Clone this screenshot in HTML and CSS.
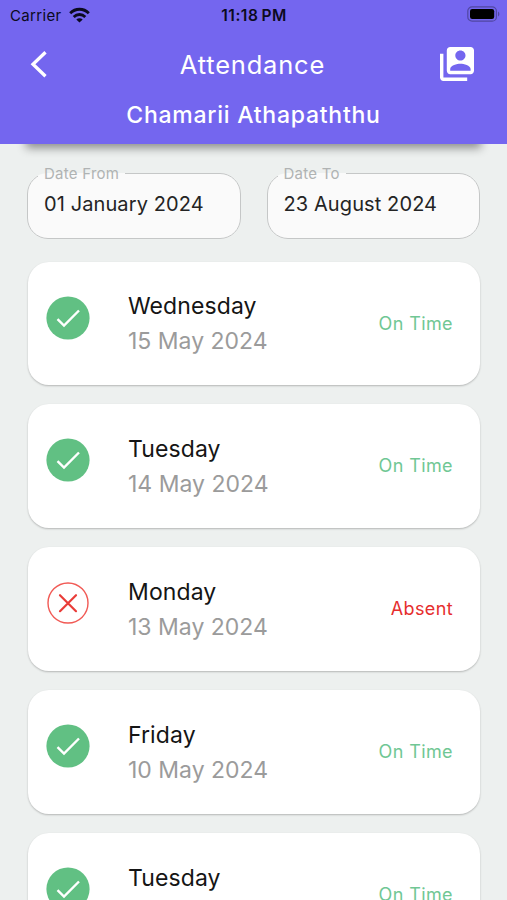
FILE: index.html
```html
<!DOCTYPE html>
<html lang="en">
<head>
<meta charset="utf-8">
<title>Attendance</title>
<link rel="stylesheet" href="styles.css">
</head>
<body>
<svg class="defs" aria-hidden="true">
  <symbol id="present" viewBox="0 0 44 44"><circle cx="22" cy="22" r="21.6" fill="#61c083"/><path d="M11.5 23.2 18 29.6 33 14.5" fill="none" stroke="#fff" stroke-width="2.4"/></symbol>
  <symbol id="absent" viewBox="0 0 44 44"><circle cx="22" cy="22" r="20" fill="none" stroke="#f15a55" stroke-width="1.4"/><path d="M14 14.2 30 30.2M30 14.2 14 30.2" fill="none" stroke="#e93c38" stroke-width="2.2" stroke-linecap="round"/></symbol>
</svg>
<header class="header">
  <div class="status">
    <div class="carrier"><span>Carrier</span>
      <svg width="21" height="16" viewBox="0 0 21 16"><g fill="none" stroke="#0b0a20" stroke-width="2.8"><path d="M1.2 6.2C6.4.9 14.6.9 19.8 6.2"/><path d="M4.7 9.9c3.3-3.2 8.3-3.2 11.6 0"/></g><path d="M7.3 12.4c1.9-1.7 4.5-1.7 6.4 0l-3.2 3.2z" fill="#0b0a20"/></svg>
    </div>
    <span class="clock">11:18 PM</span>
    <svg class="battery" width="33" height="16" viewBox="0 0 33 16"><rect x=".8" y=".8" width="28.6" height="14.4" rx="4.3" fill="none" stroke="#5047a2" stroke-width="1.2"/><rect x="3" y="3" width="24.2" height="10" rx="2.2" fill="#000"/><path d="M31 5.500c1.800.8 1.800 4.200 0 5z" fill="#5047a2"/></svg>
  </div>
  <div class="bar">
    <svg width="18" height="28" viewBox="0 0 18 28"><path d="M15.500 2.200 3 14.200 15.500 26.200" fill="none" stroke="#fff" stroke-width="3.300"/></svg>
    <h1 class="title">Attendance</h1>
    <svg width="34" height="34" viewBox="0 0 20 20"><path fill="#fff" fill-rule="evenodd" d="M2 4H0v14c0 1.100.9 2 2 2h14v-2H2zM18 0H6C4.900 0 4 .9 4 2v12c0 1.100.9 2 2 2h12c1.100 0 2-.9 2-2V2c0-1.100-.9-2-2-2zm-6 2c1.660 0 3 1.340 3 3s-1.340 3-3 3-3-1.340-3-3 1.340-3 3-3zm6 12H6v-1c0-2 4-3.100 6-3.100s6 1.100 6 3.100z"/></svg>
  </div>
  <h2 class="person">Chamarii Athapaththu</h2>
</header>
<main class="content">
  <div class="dates">
    <fieldset class="date"><legend>Date From</legend><span>01 January 2024</span></fieldset>
    <fieldset class="date"><legend>Date To</legend><span>23 August 2024</span></fieldset>
  </div>
  <div class="list">
    <article class="card"><svg class="mark"><use href="#present"/></svg><div class="info"><div class="day">Wednesday</div><div class="when">15 May 2024</div></div><div class="state">On Time</div></article>
    <article class="card"><svg class="mark"><use href="#present"/></svg><div class="info"><div class="day">Tuesday</div><div class="when">14 May 2024</div></div><div class="state">On Time</div></article>
    <article class="card"><svg class="mark"><use href="#absent"/></svg><div class="info"><div class="day">Monday</div><div class="when">13 May 2024</div></div><div class="state missed">Absent</div></article>
    <article class="card"><svg class="mark"><use href="#present"/></svg><div class="info"><div class="day">Friday</div><div class="when">10 May 2024</div></div><div class="state">On Time</div></article>
    <article class="card"><svg class="mark"><use href="#present"/></svg><div class="info"><div class="day">Tuesday</div></div><div class="state">On Time</div></article>
  </div>
</main>
</body>
</html>
```
FILE: styles.css
```css
* { box-sizing: border-box; }
body {
  margin: 0;
  height: 900px;
  overflow: hidden;
  background: #edf0ef;
  font-family: Inter, "Liberation Sans", sans-serif;
  color: #151515;
}
.defs { display: none; }
svg { display: block; flex: none; }
.header {
  position: relative;
  height: 144px;
  background: #7466ef;
  color: #fff;
}
.header::after {
  content: "";
  position: absolute;
  z-index: -1;
  left: 26px;
  right: 26px;
  bottom: 0;
  height: 20px;
  box-shadow: 0 4px 10px rgba(0, 0, 0, .42);
}
.status {
  display: grid;
  grid-template-columns: 1fr auto 1fr;
  align-items: center;
  height: 30px;
  padding: 0 7px 0 10px;
  color: #0b0a20;
  font-size: 15px;
}
.carrier { display: flex; align-items: center; gap: 7px; letter-spacing: .35px; }
.clock { margin-right: 2px; font-size: 15.5px; font-weight: 600; letter-spacing: .55px; word-spacing: -1.5px; }
.battery { justify-self: end; margin-top: -2px; }
.bar {
  display: flex;
  align-items: center;
  justify-content: space-between;
  height: 68px;
  padding: 0 33px 0 30px;
}
.title {
  margin: 0 0 0 17px;
  font-size: 25.5px;
  font-weight: 400;
  letter-spacing: .8px;
}
.person {
  margin: 2px 0 0;
  text-align: center;
  font-size: 23px;
  line-height: 30px;
  font-weight: 500;
  letter-spacing: .75px;
}
.content { padding: 21px 27px 0; }
.dates { display: flex; gap: 26px; }
.date {
  flex: 1;
  min-width: 0;
  height: 74px;
  margin: 0;
  padding: 9px 10px 0;
  border: 1px solid #c5c7c7;
  border-radius: 21px;
  background: #fafafa;
  font-size: 20px;
  line-height: 26px;
  letter-spacing: .1px;
  color: #242424;
}
.date legend {
  padding: 0 6px;
  font-size: 15px;
  line-height: 17px;
  letter-spacing: .25px;
  color: #b0b3b3;
}
.date span { display: block; padding-left: 6px; }
.list { display: grid; gap: 19px; margin-top: 22.5px; }
.card {
  display: flex;
  align-items: flex-start;
  height: 123.9px;
  margin: 0 0 0 1px;
  padding: 0 27px 0 18px;
  border-radius: 21px;
  background: #fff;
  box-shadow: 0 1px 2px rgba(0, 0, 0, .24);
}
.mark { width: 44px; height: 44px; margin-top: 34px; }
.info { flex: 1; margin: 27.5px 0 0 38px; font-size: 23px; line-height: 35px; }
.day { letter-spacing: .1px; }
.when { letter-spacing: 0; color: #9b9b9b; }
.state { margin-top: 50px; font-size: 18px; line-height: 24px; letter-spacing: .4px; color: #70c794; }
.missed { color: #e62e2e; }
```
